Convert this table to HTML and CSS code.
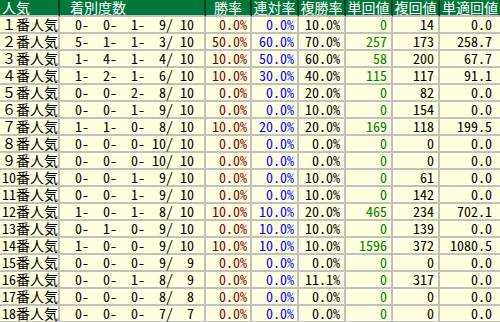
FILE: index.html
```html
<!DOCTYPE html>
<html lang="ja">
<head>
<meta charset="utf-8">
<link rel="stylesheet" href="styles.css">
</head>
<body>
<table class="stats">
<colgroup>
<col class="c-pop"><col class="c-rec"><col class="c-pct"><col class="c-pct2"><col class="c-pct2"><col class="c-pct2"><col class="c-pct2"><col class="c-last">
</colgroup>
<thead>
<tr>
<th class="h-left">人気</th>
<th class="h-rec">着別度数</th>
<th>勝率</th>
<th>連対率</th>
<th>複勝率</th>
<th>単回値</th>
<th>複回値</th>
<th class="last">単適回値</th>
</tr>
</thead>
<tbody>
<tr><td class="pop">１番人気</td><td class="rec"> 0-  0-  1-  9/ 10</td><td class="win">0.0%</td><td class="ren">0.0%</td><td class="num">10.0%</td><td class="tan">0</td><td class="num">14</td><td class="num last">0.0</td></tr>
<tr><td class="pop">２番人気</td><td class="rec"> 5-  1-  1-  3/ 10</td><td class="win">50.0%</td><td class="ren">60.0%</td><td class="num">70.0%</td><td class="tan">257</td><td class="num">173</td><td class="num last">258.7</td></tr>
<tr><td class="pop">３番人気</td><td class="rec"> 1-  4-  1-  4/ 10</td><td class="win">10.0%</td><td class="ren">50.0%</td><td class="num">60.0%</td><td class="tan">58</td><td class="num">200</td><td class="num last">67.7</td></tr>
<tr><td class="pop">４番人気</td><td class="rec"> 1-  2-  1-  6/ 10</td><td class="win">10.0%</td><td class="ren">30.0%</td><td class="num">40.0%</td><td class="tan">115</td><td class="num">117</td><td class="num last">91.1</td></tr>
<tr><td class="pop">５番人気</td><td class="rec"> 0-  0-  2-  8/ 10</td><td class="win">0.0%</td><td class="ren">0.0%</td><td class="num">20.0%</td><td class="tan">0</td><td class="num">82</td><td class="num last">0.0</td></tr>
<tr><td class="pop">６番人気</td><td class="rec"> 0-  0-  1-  9/ 10</td><td class="win">0.0%</td><td class="ren">0.0%</td><td class="num">10.0%</td><td class="tan">0</td><td class="num">154</td><td class="num last">0.0</td></tr>
<tr><td class="pop">７番人気</td><td class="rec"> 1-  1-  0-  8/ 10</td><td class="win">10.0%</td><td class="ren">20.0%</td><td class="num">20.0%</td><td class="tan">169</td><td class="num">118</td><td class="num last">199.5</td></tr>
<tr><td class="pop">８番人気</td><td class="rec"> 0-  0-  0- 10/ 10</td><td class="win">0.0%</td><td class="ren">0.0%</td><td class="num">0.0%</td><td class="tan">0</td><td class="num">0</td><td class="num last">0.0</td></tr>
<tr><td class="pop">９番人気</td><td class="rec"> 0-  0-  0- 10/ 10</td><td class="win">0.0%</td><td class="ren">0.0%</td><td class="num">0.0%</td><td class="tan">0</td><td class="num">0</td><td class="num last">0.0</td></tr>
<tr><td class="pop">10番人気</td><td class="rec"> 0-  0-  1-  9/ 10</td><td class="win">0.0%</td><td class="ren">0.0%</td><td class="num">10.0%</td><td class="tan">0</td><td class="num">61</td><td class="num last">0.0</td></tr>
<tr><td class="pop">11番人気</td><td class="rec"> 0-  0-  1-  9/ 10</td><td class="win">0.0%</td><td class="ren">0.0%</td><td class="num">10.0%</td><td class="tan">0</td><td class="num">142</td><td class="num last">0.0</td></tr>
<tr><td class="pop">12番人気</td><td class="rec"> 1-  0-  1-  8/ 10</td><td class="win">10.0%</td><td class="ren">10.0%</td><td class="num">20.0%</td><td class="tan">465</td><td class="num">234</td><td class="num last">702.1</td></tr>
<tr><td class="pop">13番人気</td><td class="rec"> 0-  1-  0-  9/ 10</td><td class="win">0.0%</td><td class="ren">10.0%</td><td class="num">10.0%</td><td class="tan">0</td><td class="num">139</td><td class="num last">0.0</td></tr>
<tr><td class="pop">14番人気</td><td class="rec"> 1-  0-  0-  9/ 10</td><td class="win">10.0%</td><td class="ren">10.0%</td><td class="num">10.0%</td><td class="tan">1596</td><td class="num">372</td><td class="num last">1080.5</td></tr>
<tr><td class="pop">15番人気</td><td class="rec"> 0-  0-  0-  9/  9</td><td class="win">0.0%</td><td class="ren">0.0%</td><td class="num">0.0%</td><td class="tan">0</td><td class="num">0</td><td class="num last">0.0</td></tr>
<tr><td class="pop">16番人気</td><td class="rec"> 0-  0-  1-  8/  9</td><td class="win">0.0%</td><td class="ren">0.0%</td><td class="num">11.1%</td><td class="tan">0</td><td class="num">317</td><td class="num last">0.0</td></tr>
<tr><td class="pop">17番人気</td><td class="rec"> 0-  0-  0-  8/  8</td><td class="win">0.0%</td><td class="ren">0.0%</td><td class="num">0.0%</td><td class="tan">0</td><td class="num">0</td><td class="num last">0.0</td></tr>
<tr><td class="pop">18番人気</td><td class="rec"> 0-  0-  0-  7/  7</td><td class="win">0.0%</td><td class="ren">0.0%</td><td class="num">0.0%</td><td class="tan">0</td><td class="num">0</td><td class="num last">0.0</td></tr>
</tbody>
</table>
</body>
</html>
```

FILE: styles.css
```css
html, body {
  margin: 0;
  padding: 0;
  background: #ffffe0;
}

.stats {
  table-layout: fixed;
  width: 500px;
  border-collapse: separate;
  border-spacing: 0;
  font-family: "Noto Sans Mono CJK JP", "Noto Sans CJK JP", sans-serif;
  font-variant-east-asian: half-width;
  font-size: 14px;
  line-height: 15px;
}

.c-pop { width: 60px; }
.c-rec { width: 146px; }
.c-pct { width: 46px; }
.c-pct2 { width: 47px; }
.c-last { width: 60px; }

.stats th,
.stats td {
  padding: 0;
  height: 15px;
  border-right: 2px solid #c0c0c0;
  border-bottom: 2px solid #c0c0c0;
  white-space: pre;
  font-weight: normal;
}

.stats th {
  background: #00783c;
  color: #ffffff;
  text-align: center;
  border-right-color: #0b3d22;
}

.stats .last {
  border-right: 0;
}

.stats th.h-left {
  text-align: left;
  padding-left: 2px;
}

.stats th.h-rec {
  text-align: left;
  padding-left: 10px;
}

.stats td {
  background: #ffffe0;
  color: #000000;
  text-align: right;
  padding-right: 3px;
}

.stats td.pop {
  text-align: left;
  padding-left: 2px;
  padding-right: 0;
}

.stats td.rec {
  padding-right: 10px;
}

.stats td.win { color: #800000; }
.stats td.ren { color: #0000ff; }
.stats td.tan { color: #008000; padding-right: 4px; }
.stats td.num { padding-right: 4px; }
.stats td.last { padding-right: 8px; }
```
